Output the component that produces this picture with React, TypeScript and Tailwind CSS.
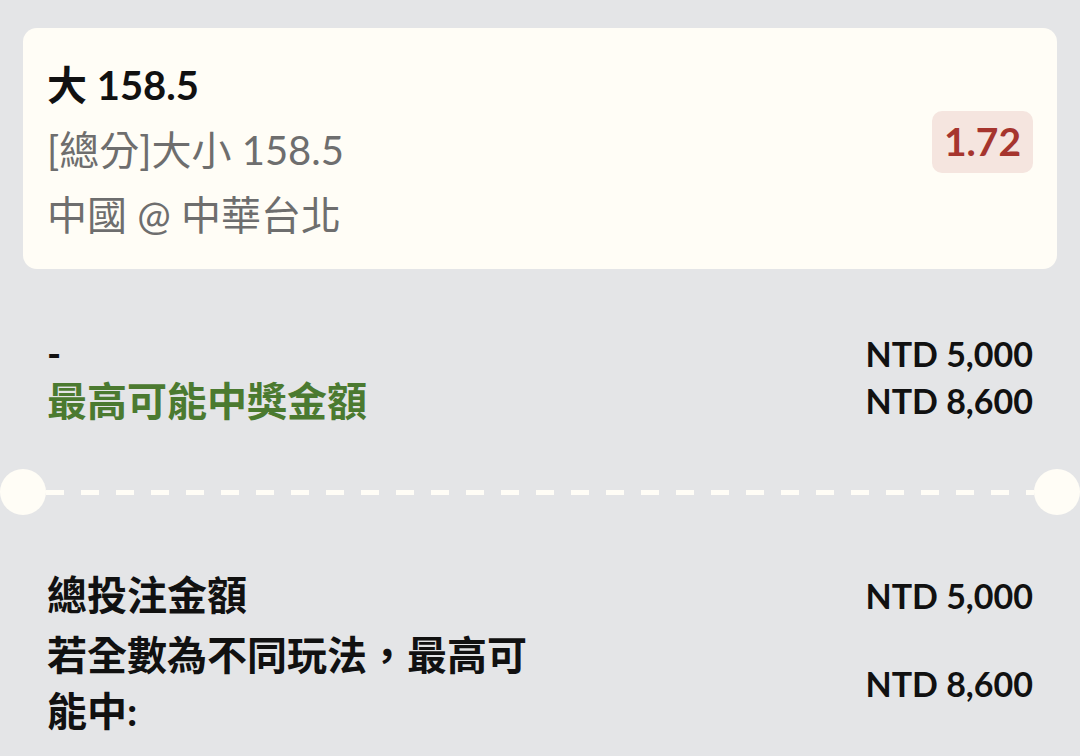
import React from "react";

const FONT = "font-['Lato','Noto_Sans_CJK_TC',sans-serif]";

export default function App() {
  return (
    <div className={`w-[1080px] h-[756px] overflow-hidden bg-[#e4e5e7] px-[23px] pt-[28px] ${FONT}`}>
      {/* Bet card */}
      <div className="rounded-[14px] bg-[#fffdf6] pl-[24px] pr-[24px] pt-[25px] pb-[21px] flex items-center justify-between">
        <div className="flex flex-col">
          <div className="text-[40px] leading-[65px] font-bold text-[#111111]">大 158.5</div>
          <div className="text-[40px] leading-[65px] text-[#6e6e6e]">[總分]大小 158.5</div>
          <div className="text-[40px] leading-[65px] text-[#6e6e6e]">中國 @ 中華台北</div>
        </div>
        <div className="mb-[18px] rounded-[10px] bg-[#f5e5df] w-[101px] h-[62px] flex items-center justify-center text-[39px] font-bold text-[#a6352e]">
          1.72
        </div>
      </div>

      {/* Stake / potential */}
      <div className="mt-[61px] px-[24px] flex flex-col">
        <div className="h-[47px] flex items-center justify-between">
          <span className="text-[38px] font-bold text-[#111111]">-</span>
          <span className="text-[34px] font-bold text-[#111111]">NTD 5,000</span>
        </div>
        <div className="h-[47px] flex items-center justify-between">
          <span className="text-[40px] font-bold text-[#4b7a30]">最高可能中獎金額</span>
          <span className="text-[34px] font-bold text-[#111111]">NTD 8,600</span>
        </div>
      </div>

      {/* Ticket divider */}
      <div className="mt-[45px] -mx-[23px] h-[46px] flex items-center">
        <div className="w-[46px] h-[46px] rounded-full bg-[#fffdf6] shrink-0" />
        <div className="flex-1 h-[5px] bg-[repeating-linear-gradient(90deg,#fffdf6_0px,#fffdf6_18px,transparent_18px,transparent_35px)]" />
        <div className="w-[46px] h-[46px] rounded-full bg-[#fffdf6] shrink-0" />
      </div>

      {/* Totals */}
      <div className="mt-[52px] px-[24px] flex flex-col gap-[4px]">
        <div className="flex items-center justify-between">
          <span className="text-[40px] leading-[56px] font-bold text-[#111111]">總投注金額</span>
          <span className="text-[34px] font-bold text-[#111111]">NTD 5,000</span>
        </div>
        <div className="flex items-center justify-between">
          <span className="w-[500px] text-[40px] leading-[56px] font-bold text-[#111111]">若全數為不同玩法，最高可能中:</span>
          <span className="text-[34px] font-bold text-[#111111]">NTD 8,600</span>
        </div>
      </div>
    </div>
  );
}
